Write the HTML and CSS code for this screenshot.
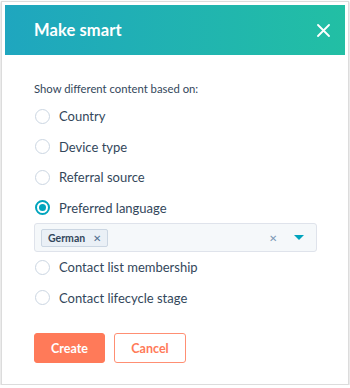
FILE: index.html
```html
<!DOCTYPE html>
<html lang="en">
  <head>
    <meta charset="UTF-8" />
    <title>Make smart</title>
    <meta name="viewport" content="width=device-width, initial-scale=1.0" />
    <link rel="stylesheet" href="styles.css">
  </head>
  <body>
    <div class="modal">
      <div class="modal-header">
        <h2>Make smart</h2>
        <button class="close-btn" aria-label="Close">
          <svg width="13" height="13" viewBox="0 0 13 13">
            <path d="M1 1L12 12M12 1L1 12" stroke="#fff" stroke-width="1.8" stroke-linecap="round" />
          </svg>
        </button>
      </div>

      <div class="modal-body">
        <div class="label">Show different content based on:</div>

        <div class="options">
          <label class="option"><span class="radio"></span>Country</label>
          <label class="option"><span class="radio"></span>Device type</label>
          <label class="option"><span class="radio"></span>Referral source</label>
          <label class="option"><span class="radio checked"></span>Preferred language</label>

          <div class="select">
            <span class="tag">German <span class="tag-x">&#x2715;</span></span>
            <span class="select-clear">&#x2715;</span>
            <span class="caret"></span>
          </div>

          <label class="option"><span class="radio"></span>Contact list membership</label>
          <label class="option"><span class="radio"></span>Contact lifecycle stage</label>
        </div>

        <div class="actions">
          <button class="btn btn-primary">Create</button>
          <button class="btn btn-secondary">Cancel</button>
        </div>
      </div>
    </div>
  </body>
</html>
```

FILE: styles.css
```css
* {
  box-sizing: border-box;
  font-family: "Lato", "Open Sans", sans-serif;
}

body {
  background-color: #fff;
  margin: 0;
}

.modal {
  margin: 1px 1px 0 1px;
  height: 384px;
  border: 1px solid #dcdcdc;
  box-shadow: 0 1px 2px rgba(0, 0, 0, 0.25);
  padding: 3px 3px 0 3px;
  background-color: #fff;
}

.modal-header {
  height: 50px;
  display: flex;
  align-items: center;
  justify-content: space-between;
  padding: 0 15px 0 29px;
  background: linear-gradient(90deg, #1fa6bf, #22bfa4);
}

.modal-header h2 {
  margin: 0;
  color: #fff;
  font-size: 16.5px;
  font-weight: 700;
  letter-spacing: 0.1px;
}

.close-btn {
  background: none;
  border: none;
  padding: 0;
  width: 13px;
  height: 13px;
  display: flex;
  cursor: pointer;
}

.modal-body {
  padding: 26px 28px 0 29px;
}

.label {
  font-size: 11.3px;
  line-height: 16px;
  color: #33475b;
  margin-bottom: 4px;
}

.options {
  display: flex;
  flex-direction: column;
}

.option {
  display: flex;
  align-items: center;
  height: 30.5px;
  font-size: 13px;
  color: #33475b;
}

.radio {
  width: 15px;
  height: 15px;
  border: 1px solid #cbd6e2;
  border-radius: 50%;
  background-color: #fff;
  margin-left: 1px;
  margin-right: 9px;
  flex-shrink: 0;
  display: flex;
  align-items: center;
  justify-content: center;
}

.radio.checked {
  border: 2px solid #00a4bd;
}

.radio.checked::after {
  content: "";
  width: 7px;
  height: 7px;
  border-radius: 50%;
  background-color: #00a4bd;
}

.select {
  height: 29px;
  display: flex;
  align-items: center;
  background-color: #f5f8fa;
  border: 1px solid #dfe3eb;
  border-radius: 3px;
  padding: 0 12px 0 6px;
}

.tag {
  display: flex;
  align-items: center;
  height: 18px;
  padding: 0 6px 0 6px;
  background-color: #eaf0f6;
  border: 1px solid #cbd6e2;
  border-radius: 2px;
  font-size: 10.5px;
  font-weight: 700;
  color: #33475b;
}

.tag-x {
  font-size: 10px;
  font-weight: 400;
  margin-left: 8px;
  color: #516f90;
}

.select-clear {
  margin-left: auto;
  font-size: 10px;
  color: #7c98b6;
  margin-right: 17px;
}

.caret {
  width: 0;
  height: 0;
  border-left: 5px solid transparent;
  border-right: 5px solid transparent;
  border-top: 5px solid #00a4bd;
}

.actions {
  display: flex;
  gap: 9px;
  margin-top: 20px;
}

.btn {
  height: 30px;
  padding: 0;
  border-radius: 3px;
  font-size: 12.5px;
  font-weight: 700;
  cursor: pointer;
}

.btn-primary {
  width: 71px;
  background-color: #ff7a59;
  border: 1px solid #ff7a59;
  color: #fff;
}

.btn-secondary {
  width: 72px;
  background-color: #fff;
  border: 1px solid #ff8f73;
  color: #ff7a59;
}
```
